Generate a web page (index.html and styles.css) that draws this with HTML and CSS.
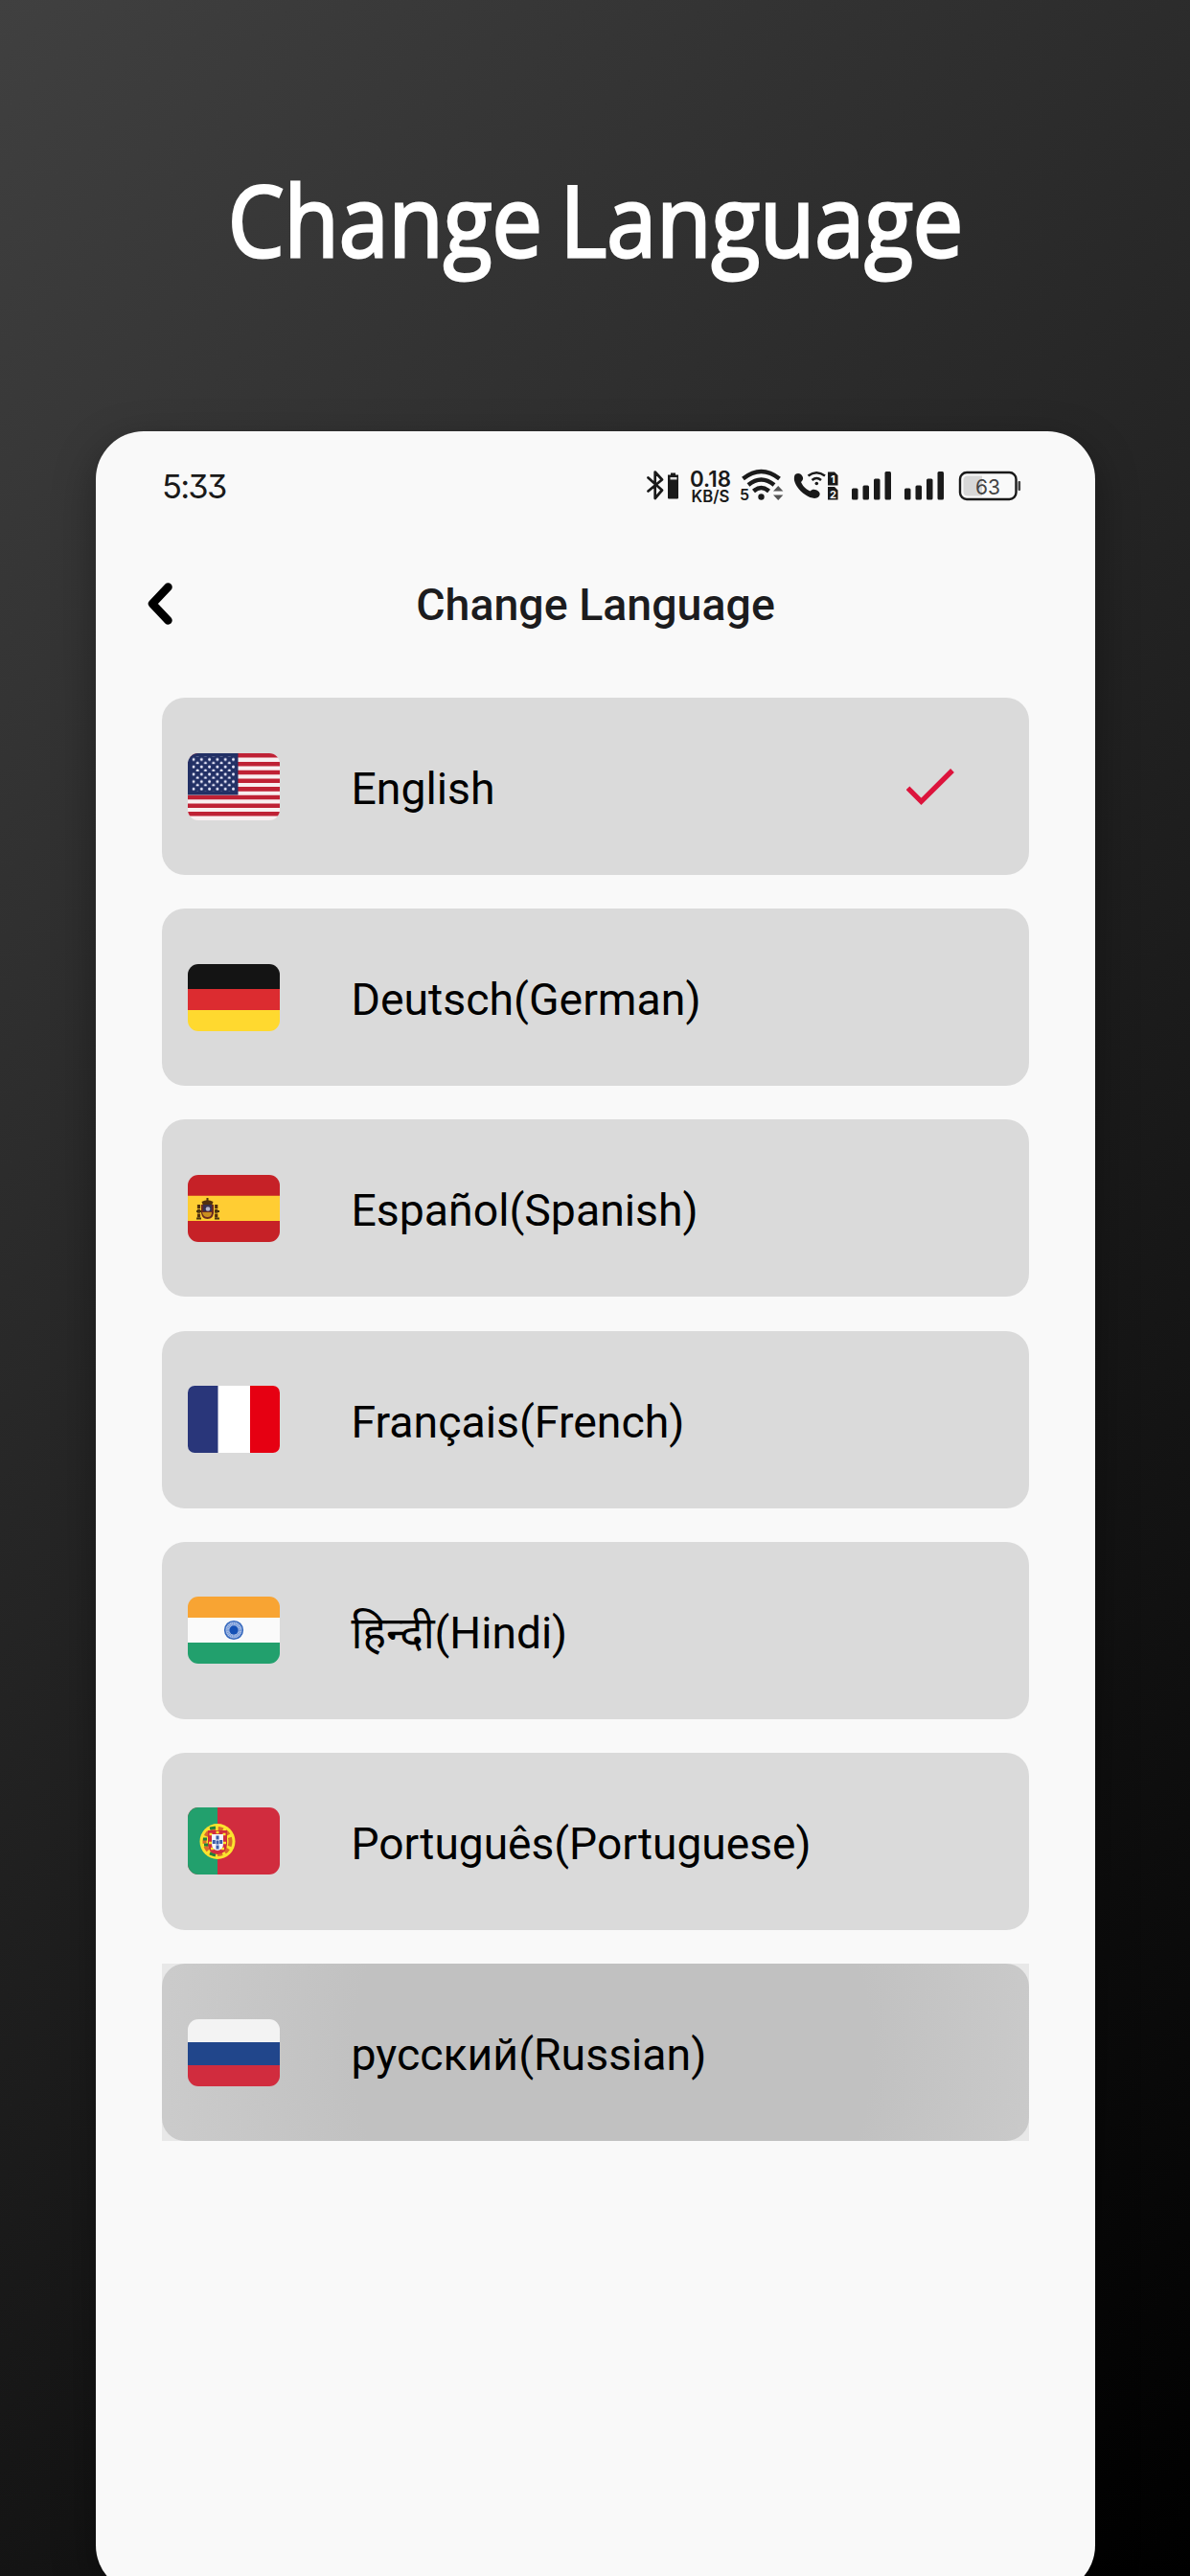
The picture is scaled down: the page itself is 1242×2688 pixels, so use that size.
FILE: index.html
```html
<!DOCTYPE html>
<html lang="en">
<head>
<meta charset="utf-8">
<title>Change Language</title>
<link rel="stylesheet" href="styles.css">
</head>
<body>
<main class="page">
  <h1 class="headline"><span>Change Language</span></h1>
  <section class="phone">
    <div class="status">
      <span class="time">5:33</span>
      <svg class="ico bt" width="36" height="44" viewBox="673 484 36 44"><path d="M675.5 498.500l14.500 13-7.300 8.500v-27.500l7.300 8-14.500 12" fill="none" stroke="#1a1a1a" stroke-width="2.700" stroke-linejoin="round" stroke-linecap="round"/><path d="M699 493.500h5v2h3v24q0 1-1 1h-9q-1 0-1-1v-24h3z" fill="#1a1a1a"/><path d="M698.500 498h7v2.500h-7z" fill="#ddd"/></svg>
      <svg class="ico speed" width="46" height="44" viewBox="718 484 46 44"><text x="719" y="507.500" textLength="43" lengthAdjust="spacingAndGlyphs" class="s1">0.18</text><text x="720.500" y="524" textLength="40" lengthAdjust="spacingAndGlyphs" class="s2">KB/S</text></svg>
      <svg class="ico wifi" width="48" height="44" viewBox="770 484 48 44"><g fill="none" stroke="#1a1a1a" stroke-width="4.500"><path d="M774.500 499.500q19-15 38 0"/><path d="M780 506q13.500-11 27 0"/><path d="M785.500 512.500q8-7 16 0"/></g><circle cx="793.500" cy="518.500" r="3.200" fill="#1a1a1a"/><text x="771" y="522" class="s5">5</text><path d="M806 512.500l5.200-5.500 5.200 5.500zM806 516.500l5.200 5.500 5.200-5.500z" fill="#555"/></svg>
      <svg class="ico call" width="50" height="44" viewBox="826 484 50 44"><path d="M829 495c3-2 6-1 7.500 2 1.500 3 0 4.500-1.500 6 2 4.500 5 7.500 9.500 9.500 2-2 4-2.300 6.500-1.200 4 1.800 4.500 4.500 2.500 7-3 3-9 1.500-14-2-6-4-10.500-10-11.500-15-.400-3 .100-5 1-6.300z" fill="#1a1a1a"/><g fill="none" stroke="#1a1a1a" stroke-width="2.500"><path d="M842.500 496.500q8.700-6.500 17.500 0"/><path d="M846.500 501q4.800-4 9.500 0"/></g><circle cx="851.300" cy="504.500" r="1.800" fill="#1a1a1a"/><path d="M863 492.500h7l3.500 3.500v10.500h-10.500zM863 508h7l3.500 3.500v10h-10.500z" fill="#1a1a1a"/><text x="866" y="504" class="sim">1</text><text x="865" y="519.500" class="sim">2</text></svg>
      <svg class="ico sig" width="42" height="44" viewBox="887 484 42 44"><g fill="#1a1a1a"><rect x="888" y="509.500" width="6.500" height="12" rx="1.500"/><rect x="899.500" y="506.500" width="6.500" height="15" rx="1.500"/><rect x="911" y="499.500" width="6.500" height="22" rx="1.500"/><rect x="922.500" y="492" width="6.500" height="29.500" rx="1.500"/></g></svg>
      <svg class="ico sig2" width="42" height="44" viewBox="887 484 42 44"><g fill="#1a1a1a"><rect x="888" y="509.500" width="6.500" height="12" rx="1.500"/><rect x="899.500" y="506.500" width="6.500" height="15" rx="1.500"/><rect x="911" y="499.500" width="6.500" height="22" rx="1.500"/><rect x="922.500" y="492" width="6.500" height="29.500" rx="1.500"/></g></svg>
      <svg class="ico batt" width="66" height="44" viewBox="999 484 66 44"><rect x="1001" y="493" width="58.500" height="28" rx="7" fill="none" stroke="#1a1a1a" stroke-width="2.400"/><path d="M1024 496.500h-15q-4.500 0-4.500 4.500v12q0 4.500 4.500 4.500h15z" fill="#d8d8d8"/><rect x="1061.500" y="502" width="2.600" height="10" rx="1" fill="#444"/><text x="1017" y="515.500" textLength="26" lengthAdjust="spacingAndGlyphs" class="pct">63</text></svg>
    </div>
    <header class="bar">
      <svg class="back" width="32" height="48" viewBox="0 0 32 48"><path d="M23.500 6.500L7 24l16.500 17.500" fill="none" stroke="#000" stroke-width="8.500" stroke-linecap="round" stroke-linejoin="round"/></svg>
      <h2 class="title">Change Language</h2>
    </header>
    <ul class="list">
      <li class="item"><div class="card">
        <svg class="flag" viewBox="0 0 96 70"><defs><pattern id="stars" x="4.500" y="3.500" width="8.300" height="7.700" patternUnits="userSpaceOnUse"><circle cx="1.500" cy="3" r="1.500" fill="#eef"/><circle cx="5.650" cy="6.850" r="1.500" fill="#eef"/></pattern></defs><path fill="#f8eef0" d="M0 0h96v70H0z"/><path stroke="#bf2135" stroke-width="4.600" d="M0 2.200h96M0 11.300h96M0 20h96M0 28.700h96M0 37.400h96M0 46h96M0 54.700h96M0 63.300h96"/><path fill="#223065" d="M0 0h52.500v43.500H0z"/><path fill="url(#stars)" d="M4.500 3.500h45v36h-45z"/></svg>
        <span class="name">English</span>
        <svg class="check" width="50" height="40" viewBox="0 0 50 40"><path d="M1.500 20.300L15.500 34.300L48 2" fill="none" stroke="#dc143c" stroke-width="5.400"/></svg>
      </div></li>
      <li class="item"><div class="card">
        <svg class="flag" viewBox="0 0 96 70"><path fill="#141414" d="M0 0h96v26H0z"/><path fill="#dc2c30" d="M0 26h96v22H0z"/><path fill="#ffd92f" d="M0 48h96v22H0z"/></svg>
        <span class="name">Deutsch(German)</span>
      </div></li>
      <li class="item"><div class="card">
        <svg class="flag" viewBox="0 0 96 70"><path fill="#c62127" d="M0 0h96v70H0z"/><path fill="#ffcd33" d="M0 21.700h96v26.300H0z"/><path d="M14.500 28q6-3.500 12 0l-1.500 4h-9z" fill="#51300d"/><path d="M20.500 24v3" stroke="#51300d" stroke-width="2"/><path d="M14 31h13v9q-1 6-6.500 6T14 40z" fill="#6b2b20"/><path d="M16 31h9v7h-9z" fill="#37304d"/><path d="M15 39h10q0 5-4.500 5T15 39z" fill="#c98f20"/><circle cx="21" cy="35.500" r="2.300" fill="#b8b8cc"/><path d="M11.500 31v14M29.700 31v14" stroke="#51300d" stroke-width="3.200" stroke-dasharray="4 .8"/><path d="M9 38h5M28 38h5M9 45.500h5M28 45.500h5" stroke="#4a3510" stroke-width="2"/></svg>
        <span class="name">Español(Spanish)</span>
      </div></li>
      <li class="item"><div class="card">
        <svg class="flag tight" viewBox="0 0 96 70"><path fill="#fff" d="M0 0h96v70H0z"/><path fill="#29367a" d="M0 0h31.500v70H0z"/><path fill="#e60012" d="M65 0h31v70H65z"/></svg>
        <span class="name">Français(French)</span>
      </div></li>
      <li class="item"><div class="card">
        <svg class="flag" viewBox="0 0 96 70"><path fill="#f8a433" d="M0 0h96v22H0z"/><path fill="#fafafa" d="M0 22h96v26H0z"/><path fill="#22a06d" d="M0 48h96v22H0z"/><circle cx="48" cy="35" r="9.300" fill="#b3c6ea" stroke="#3568bd" stroke-width="1.600"/><circle cx="48" cy="35" r="6.500" fill="none" stroke="#7598d6" stroke-width="3" stroke-dasharray="1 .7"/><circle cx="48" cy="35" r="4.700" fill="#1450b5"/></svg>
        <span class="name hindi">हिन्दी(Hindi)</span>
      </div></li>
      <li class="item"><div class="card">
        <svg class="flag" viewBox="0 0 96 70"><path fill="#d12c3e" d="M0 0h96v70H0z"/><path fill="#22a06d" d="M0 0h31v70H0z"/><circle cx="31" cy="35.500" r="18.500" fill="#fbe32e"/><circle cx="31" cy="35.500" r="13.500" fill="none" stroke="#d96b2c" stroke-width="4" stroke-dasharray="5 3"/><path d="M16 33h4M17 39h5M23 22l6-1M23 48l6 2" stroke="#22803a" stroke-width="3"/><path d="M21 24h20v14q0 10-10 11-10-1-10-11z" fill="#d12c3e"/><path d="M22.500 28h3M29.500 26h3M36.500 28h3M22 37h3M37 37h3M24 43h3M35 43h3" stroke="#fbe32e" stroke-width="2.600"/><path d="M25 28h12v10q0 6-6 7-6-1-6-7z" fill="#f4f4fa"/><path d="M29.500 29.500h3v4h-3zM25.800 34h3v4h-3zM29.500 34.500h3v4h-3zM33.200 34h3v4h-3zM29.500 39.500h3v4h-3z" fill="#3b5da8"/></svg>
        <span class="name portuguese">Português(Portuguese)</span>
      </div></li>
      <li class="item pressed"><div class="card">
        <svg class="flag" viewBox="0 0 96 70"><path fill="#f3f3f3" d="M0 0h96v24H0z"/><path fill="#21468b" d="M0 24h96v24H0z"/><path fill="#d12c3e" d="M0 48h96v22H0z"/></svg>
        <span class="name">русский(Russian)</span>
      </div></li>
    </ul>
  </section>
</main>
</body>
</html>
```
FILE: styles.css
```css
* { box-sizing: border-box; margin: 0; padding: 0; }
html, body { height: 2688px; overflow: hidden; }
body { font-family: Roboto, "Noto Sans", sans-serif; }
.page {
  height: 2688px;
  overflow: hidden;
  display: flex;
  flex-direction: column;
  align-items: center;
  background: linear-gradient(135deg, #404040, #000);
}
.headline {
  flex: none;
  height: 450px;
  padding-top: 159px;
  font: 400 102px/139px "Open Sans", sans-serif;
  color: #fff;
  white-space: nowrap;
}
.headline span {
  display: inline-block;
  word-spacing: -6px;
  -webkit-text-stroke: 3px #fff;
  transform: scaleX(.915);
}
.phone {
  flex: none;
  width: 1043px;
  height: 2256px;
  margin-left: 1px;
  border-radius: 50px;
  background: #f9f9f9;
  box-shadow: 0 14px 44px rgba(0, 0, 0, .35);
}
.status {
  display: flex;
  align-items: center;
  height: 78px;
  padding: 34px 0 0 69px;
}
.time {
  width: 504.500px;
  padding-top: 3px;
  font: 400 34.500px/44px Inter, sans-serif;
  font-feature-settings: "cv09";
  letter-spacing: -1.800px;
  color: #1a1a1a;
}
.ico { flex: none; }
.ico text { fill: #1a1a1a; font-family: Inter, sans-serif; }
.speed { margin-left: 9px; }
.wifi { margin-left: 6px; }
.call { margin-left: 8px; }
.sig { margin-left: 11px; }
.sig2 { margin-left: 13px; }
.batt { margin-left: 15px; }
.s1 { font-size: 23px; font-weight: 600; }
.s2 { font-size: 17px; font-weight: 600; }
.s5 { font-size: 16px; font-weight: 600; }
.ico .sim { font-size: 11px; font-weight: 700; fill: #fff; }
.ico .pct { font-size: 22px; fill: #444; }
.bar {
  display: grid;
  grid-template-columns: 50px 1fr 50px;
  align-items: center;
  height: 104px;
  margin-top: 50px;
  padding: 0 49px;
}
.back { margin-left: 3px; }
.title {
  grid-column: 2;
  padding-top: 2px;
  text-align: center;
  font-size: 46.500px;
  font-weight: 500;
  line-height: 60px;
  color: #1c1c1e;
}
.list {
  display: grid;
  row-gap: 35.200px;
  margin-top: 46px;
  padding: 0 69.500px 0 69px;
  list-style: none;
}
.item { height: 185px; }
.card {
  display: flex;
  align-items: center;
  height: 100%;
  padding-left: 27px;
  border-radius: 24px;
  background: #dadada;
}
.flag { flex: none; width: 96px; height: 70px; border-radius: 11px; }
.tight { border-radius: 7px; }
.name {
  margin: 5px 0 0 74.500px;
  font-size: 46.400px;
  line-height: 60px;
  color: #000;
  white-space: nowrap;
}
.hindi, .portuguese { font-size: 46.100px; }
.check { margin: 2px 78px 0 auto; }
.pressed { background: #e8e8e8; }
.pressed .card {
  background: radial-gradient(circle at 52% 50%, #c1c1c1 270px, #cbcbcb 470px);
}
```
